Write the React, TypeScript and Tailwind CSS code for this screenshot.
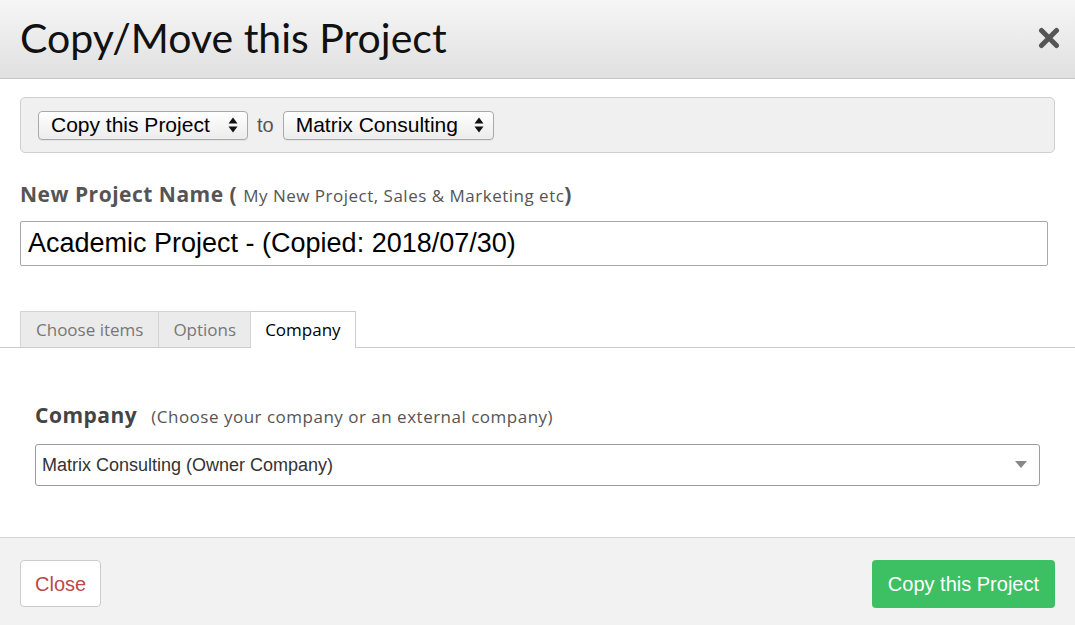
import React from "react";

const title = { fontFamily: "Lato, 'Open Sans', sans-serif" };
const heading = { fontFamily: "'Open Sans', Lato, sans-serif" };
const sans = { fontFamily: "'Liberation Sans', Arial, sans-serif" };

function MacSelect({ label, width }: { label: string; width: string }) {
  return (
    <div
      className={`${width} h-[29px] flex items-center justify-between pl-[12px] pr-[9px] rounded-[4px] border border-[#a9a9a9] bg-linear-to-b from-white to-[#ececec] shadow-[0_1px_0_rgba(0,0,0,0.05)] text-[21px] text-black`}
      style={sans}
    >
      <span>{label}</span>
      <svg width="10" height="16" viewBox="0 0 10 16">
        <path d="M5 0.5 L9.5 6.5 L0.5 6.5 Z" fill="#111" />
        <path d="M0.5 9.5 L9.5 9.5 L5 15.5 Z" fill="#111" />
      </svg>
    </div>
  );
}

export default function App() {
  return (
    <div className="w-[1075px] h-[625px] bg-white flex flex-col overflow-hidden">
      {/* header */}
      <div className="h-[79px] shrink-0 flex items-center justify-between pl-5 pr-[15px] border-b border-[#c6c6c6] bg-linear-to-b from-[#f6f6f6] to-[#e0e0e0]">
        <h1 className="text-[41px] text-[#111] leading-none -mt-[4px]" style={title}>
          Copy/Move this Project
        </h1>
        <svg width="22" height="22" viewBox="0 0 22 22" className="-mt-[2px]">
          <path d="M3.5 3.5 L18.5 18.5 M18.5 3.5 L3.5 18.5" stroke="#555" strokeWidth="5" strokeLinecap="round" />
        </svg>
      </div>

      <div className="flex-1 flex flex-col">
        {/* copy / move toolbar */}
        <div className="mx-5 mt-[18px] h-[56px] flex items-center gap-[9px] px-[17px] rounded-[5px] border border-[#cfcfcf] bg-[#f0f0f0]">
          <MacSelect label="Copy this Project" width="w-[210px]" />
          <span className="text-[20px] text-[#555]" style={sans}>
            to
          </span>
          <MacSelect label="Matrix Consulting" width="w-[211px]" />
        </div>

        {/* project name */}
        <div className="mx-5 mt-[26px] h-[28px] flex items-baseline text-[#555] tracking-[0.5px]" style={heading}>
          <span className="text-[21px] font-bold">New Project Name (</span>
          <span className="text-[17px] ml-[6px]">My New Project, Sales &amp; Marketing etc</span>
          <span className="text-[21px] font-bold">)</span>
        </div>
        <div
          className="ml-5 mr-[27px] mt-[14px] h-[45px] flex items-center px-[7px] border border-[#a8a8a8] rounded-[2px] text-[27px] text-black"
          style={sans}
        >
          Academic Project - (Copied: 2018/07/30)
        </div>

        {/* tabs */}
        <div className="mt-[45px] flex pl-5 border-b border-[#cccccc] h-[37px]">
          <div className="px-[15px] flex items-center bg-[#ebebeb] border border-b-0 border-[#d3d3d3] text-[17px] text-[#777]" style={heading}>
            Choose items
          </div>
          <div className="px-[14px] flex items-center bg-[#ebebeb] border border-l-0 border-b-0 border-[#d3d3d3] text-[17px] text-[#777]" style={heading}>
            Options
          </div>
          <div className="px-[14px] flex items-center bg-white border border-l-0 border-b-0 border-[#cccccc] text-[17px] text-black -mb-px" style={heading}>
            Company
          </div>
        </div>

        {/* company */}
        <div className="mx-[35px] mt-[52px] h-[30px] flex items-baseline tracking-[0.5px]" style={heading}>
          <span className="text-[21px] font-bold text-[#444]">Company</span>
          <span className="text-[17px] text-[#555] ml-[14px]">(Choose your company or an external company)</span>
        </div>
        <div
          className="ml-[35px] mr-[35px] mt-[14px] h-[42px] flex items-center justify-between pl-[6px] pr-[12px] border border-[#9c9c9c] rounded-[3px] text-[18px] text-[#333]"
          style={sans}
        >
          <span>Matrix Consulting (Owner Company)</span>
          <svg width="12" height="8" viewBox="0 0 12 8">
            <path d="M0 0 L12 0 L6 7 Z" fill="#888" />
          </svg>
        </div>
      </div>

      {/* footer */}
      <div className="h-[88px] shrink-0 border-t border-[#d6d6d6] bg-[#f2f2f2] flex items-start justify-between px-5 pt-[22px]">
        <button
          className="h-[47px] px-[14px] rounded-[4px] border border-[#cccccc] bg-white text-[20px] text-[#b94a48]"
          style={sans}
        >
          Close
        </button>
        <button
          className="h-[48px] px-[16px] rounded-[4px] bg-[#3dbf64] text-[20px] text-white"
          style={sans}
        >
          Copy this Project
        </button>
      </div>
    </div>
  );
}
